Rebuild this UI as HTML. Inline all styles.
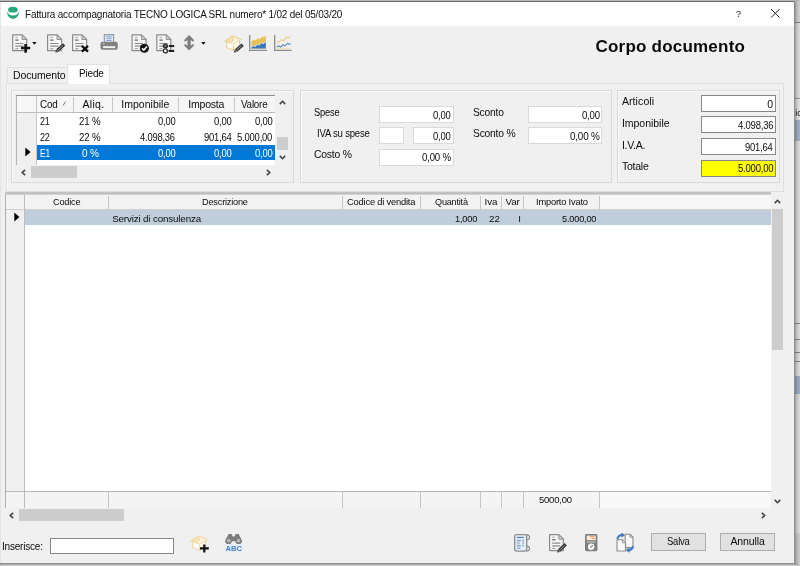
<!DOCTYPE html>
<html lang="it">
<head>
<meta charset="utf-8">
<title>Fattura accompagnatoria</title>
<style>
html,body{margin:0;padding:0;}
body{width:800px;height:566px;overflow:hidden;background:#e2e2e2;font-family:"Liberation Sans",sans-serif;font-size:10px;color:#1a1a1a;position:relative;}
#root,#root div,#root svg{position:absolute;box-sizing:border-box;}
#root{left:0;top:0;width:800px;height:566px;overflow:hidden;}
.t{white-space:nowrap;line-height:1;will-change:opacity;transform-origin:0 0;}
.box{border:1px solid #dadada;box-shadow:inset 1px 1px 0 #fafafa;}
.inp{background:#fff;border:1px solid #d9d9d9;}
.inpd{background:#fff;border:1px solid #868686;}
.vl{width:1px;background:#c6c6c6;}
.hl{height:1px;background:#c6c6c6;}
.btn{background:#e1e1e1;border:1px solid #adadad;}
</style>
</head>
<body>
<div id="root">
  <!-- background window peeking out on the right / shadow -->
  <div style="left:794px;top:0;width:6px;height:566px;background:#e6e6e6;"></div>
  <div style="left:794px;top:0;width:6px;height:22px;background:#dcdcdc;"></div>
  <div style="left:795px;top:22px;width:5px;height:1px;background:#8e8e8e;"></div>
  <div style="left:795px;top:98px;width:5px;height:1px;background:#a4a4a4;"></div>
  <div style="left:795px;top:99px;width:5px;height:21px;background:#eeeeee;"></div>
  <div class="t" style="left:795.3px;top:108.6px;font-size:9px;color:#111;">ic</div>
  <div style="left:795px;top:120px;width:5px;height:21px;background:#a9b9cd;"></div>
  <div style="left:795px;top:323px;width:5px;height:1px;background:#8c8c8c;"></div>
  <div style="left:795px;top:339px;width:5px;height:1px;background:#8c8c8c;"></div>
  <div style="left:795px;top:352px;width:5px;height:1px;background:#8c8c8c;"></div>
  <div style="left:795px;top:361px;width:5px;height:1px;background:#8c8c8c;"></div>
  <div style="left:795px;top:376px;width:5px;height:18px;background:#a3b6cf;"></div>
  <div style="left:795px;top:533px;width:5px;height:33px;background:#d6d6d6;"></div>
  <div style="left:794px;top:0;width:6px;height:566px;background:linear-gradient(90deg,rgba(0,0,0,.42),rgba(0,0,0,.16) 45%,rgba(0,0,0,.04));"></div>
  <div style="left:0;top:0;width:800px;height:1px;background:#b8b8b8;"></div>
  <div style="left:0;top:563px;width:797px;height:3px;background:linear-gradient(#7e7e7e,#b8b8b8 60%,#d0d0d0);"></div>

  <!-- window -->
  <div id="win" style="left:0;top:1px;width:794px;height:562px;background:#f0f0f0;border-top:1px solid #6a6a6a;"></div>
  <div style="left:0;top:2px;width:1px;height:561px;background:#e4e4e4;"></div>
  <div id="titlebar" style="left:1px;top:2px;width:793px;height:24px;background:#fff;"></div>
  <svg style="left:6px;top:6px;" width="16" height="15" viewBox="0 0 16 15">
    <ellipse cx="6.9" cy="3.7" rx="4.9" ry="2.9" fill="#2ba77c"/>
    <path d="M0.8 5.2 C1.6 15.2 12.6 15.2 13.4 5.2 C11.6 10.8 2.6 10.8 0.8 5.2Z" fill="#2ba77c"/>
  </svg>
  <svg style="left:770px;top:8px;" width="11" height="11" viewBox="0 0 11 11"><path d="M1 1 L9.6 9.6 M9.6 1 L1 9.6" stroke="#222" stroke-width="1" fill="none"/></svg>

  <!-- TOOLBAR -->
    <svg style="left:12px;top:34px;" width="20" height="20" viewBox="0 0 20 20"><path d="M0.7 0.9 H10.10 L14.7 5.50 V16.7 H0.7 Z" fill="#f6f6f6" stroke="#8a8a8a" stroke-width="1.2" stroke-linejoin="round"/><path d="M10.10 0.9 V5.50 H14.7 Z" fill="#d0d0d0" stroke="#8a8a8a" stroke-width="0.9" stroke-linejoin="round"/><path d="M3.3 3.50 h2.6" stroke="#b0b0b0" stroke-width="1.1"/><path d="M3.3 6.10 h3.2" stroke="#5a5a5a" stroke-width="1.2"/><path d="M3.3 9.50 h8.20 M3.3 12.10 h8.20" stroke="#8c8c8c" stroke-width="1.2"/><path d="M3.3 14.70 h3.2" stroke="#9a9a9a" stroke-width="1.1"/><path d="M9 14.1 H18.2 M13.6 10 V18.8" stroke="#111" stroke-width="2.5"/></svg>
  <svg style="left:32px;top:41px;" width="6" height="5" viewBox="0 0 6 5"><path d="M0.2 0.9 H4.6 L2.4 3.7Z" fill="#111"/></svg>
  <svg style="left:47px;top:34px;" width="20" height="20" viewBox="0 0 20 20"><path d="M0.6 0.9 H10.00 L14.6 5.50 V16.7 H0.6 Z" fill="#f6f6f6" stroke="#8a8a8a" stroke-width="1.2" stroke-linejoin="round"/><path d="M10.00 0.9 V5.50 H14.6 Z" fill="#d0d0d0" stroke="#8a8a8a" stroke-width="0.9" stroke-linejoin="round"/><path d="M3.2 3.50 h2.6" stroke="#b0b0b0" stroke-width="1.1"/><path d="M3.2 6.10 h3.2" stroke="#5a5a5a" stroke-width="1.2"/><path d="M3.2 9.50 h8.20 M3.2 12.10 h8.20" stroke="#8c8c8c" stroke-width="1.2"/><path d="M3.2 14.70 h3.2" stroke="#9a9a9a" stroke-width="1.1"/><path d="M8.30 18.40 L11.47 18.04 L9.00 15.29Z" fill="#3a3a3a"/><path d="M11.47 18.04 L18.44 11.78 L15.96 9.02 L9.00 15.29Z" fill="#2e2e2e" stroke="#f0f0f0" stroke-width="0.5"/><path d="M10.83 16.13 L16.01 11.47" stroke="#9a9a9a" stroke-width="1.0"/></svg>
  <svg style="left:72px;top:34px;" width="20" height="20" viewBox="0 0 20 20"><path d="M0.6 0.9 H10.00 L14.6 5.50 V16.7 H0.6 Z" fill="#f6f6f6" stroke="#8a8a8a" stroke-width="1.2" stroke-linejoin="round"/><path d="M10.00 0.9 V5.50 H14.6 Z" fill="#d0d0d0" stroke="#8a8a8a" stroke-width="0.9" stroke-linejoin="round"/><path d="M3.2 3.50 h2.6" stroke="#b0b0b0" stroke-width="1.1"/><path d="M3.2 6.10 h3.2" stroke="#5a5a5a" stroke-width="1.2"/><path d="M3.2 9.50 h8.20 M3.2 12.10 h8.20" stroke="#8c8c8c" stroke-width="1.2"/><path d="M3.2 14.70 h3.2" stroke="#9a9a9a" stroke-width="1.1"/><path d="M9.9 11.8 L16 17.6 M16 11.8 L9.9 17.6" stroke="#111" stroke-width="2.3"/></svg>
  <svg style="left:100px;top:34px;" width="19" height="17" viewBox="0 0 19 17"><path d="M4.3 8 V0.6 H13.6 V8" fill="#dfeaf6" stroke="#8e9aa8" stroke-width="1.1"/><path d="M6.3 2.7 H11.6 M6.3 4.6 H11.6 M6.3 6.5 H11.6" stroke="#7fa6d2" stroke-width="1"/><rect x="0.5" y="7.8" width="17.2" height="8" rx="2" fill="#808080"/><rect x="3" y="12.2" width="12.2" height="1.9" fill="#f4f4f4"/><rect x="2.6" y="9.3" width="2" height="0.9" fill="#e0e0e0"/></svg>
  <svg style="left:131px;top:34px;" width="20" height="20" viewBox="0 0 20 20"><path d="M1.1 0.9 H10.50 L15.1 5.50 V16.7 H1.1 Z" fill="#f6f6f6" stroke="#8a8a8a" stroke-width="1.2" stroke-linejoin="round"/><path d="M10.50 0.9 V5.50 H15.1 Z" fill="#d0d0d0" stroke="#8a8a8a" stroke-width="0.9" stroke-linejoin="round"/><path d="M3.7 3.50 h2.6" stroke="#b0b0b0" stroke-width="1.1"/><path d="M3.7 6.10 h3.2" stroke="#5a5a5a" stroke-width="1.2"/><path d="M3.7 9.50 h8.20 M3.7 12.10 h8.20" stroke="#8c8c8c" stroke-width="1.2"/><path d="M3.7 14.70 h3.2" stroke="#9a9a9a" stroke-width="1.1"/><circle cx="13.4" cy="14.25" r="4.5" fill="#111"/><path d="M11 14.3 L12.8 16.1 L16 12.5" stroke="#fff" stroke-width="1.5" fill="none"/></svg>
  <svg style="left:156px;top:34px;" width="20" height="20" viewBox="0 0 20 20"><path d="M0.8 0.9 H10.20 L14.8 5.50 V16.7 H0.8 Z" fill="#f6f6f6" stroke="#8a8a8a" stroke-width="1.2" stroke-linejoin="round"/><path d="M10.20 0.9 V5.50 H14.8 Z" fill="#d0d0d0" stroke="#8a8a8a" stroke-width="0.9" stroke-linejoin="round"/><path d="M3.4 3.50 h2.6" stroke="#b0b0b0" stroke-width="1.1"/><path d="M3.4 6.10 h3.2" stroke="#5a5a5a" stroke-width="1.2"/><path d="M3.4 9.50 h8.20 M3.4 12.10 h8.20" stroke="#8c8c8c" stroke-width="1.2"/><path d="M3.4 14.70 h3.2" stroke="#9a9a9a" stroke-width="1.1"/><circle cx="9.4" cy="12" r="2" fill="#6a6a6a" stroke="#222" stroke-width="1.2"/><rect x="12.8" y="11" width="5.4" height="2.1" fill="#222"/><circle cx="9.4" cy="16.9" r="2" fill="#fff" stroke="#222" stroke-width="1.2"/><rect x="12.8" y="15.9" width="5.4" height="2.1" fill="#222"/></svg>
  <svg style="left:183.5px;top:35px;" width="11" height="16" viewBox="0 0 11 16"><path d="M5.1 0.1 L10.2 5.3 L8.9 6.7 L6.7 4.9 V10.7 L8.9 8.9 L10.2 10.3 L5.1 15.5 L0 10.3 L1.3 8.9 L3.5 10.7 V4.9 L1.3 6.7 L0 5.3Z" fill="#7e7e7e"/></svg>
  <svg style="left:201px;top:41px;" width="6" height="5" viewBox="0 0 6 5"><path d="M0.2 0.9 H4.6 L2.4 3.7Z" fill="#111"/></svg>
  <svg style="left:224px;top:35px;" width="20" height="18" viewBox="0 0 20 18"><path d="M1 6.2 L8.6 1 L17 4.6 L9.6 9.4Z" fill="#fbf4de" stroke="#ebcf8c" stroke-width="1.1" stroke-linejoin="round"/><path d="M2.6 7.4 V12.6 L9.6 15.2 V9.4" fill="#fdfdfb" stroke="#ebcf8c" stroke-width="1.1" stroke-linejoin="round"/><path d="M9.6 9.4 V15.2 L15.6 11.6 V5.8" fill="#fdf8ea" stroke="#ebcf8c" stroke-width="1.1" stroke-linejoin="round"/><path d="M1 6.2 L8.6 1 L9.4 5.4 L5.6 7.6Z" fill="#f3e2b4" stroke="#ebcf8c" stroke-width="0.9" stroke-linejoin="round"/><path d="M10.00 17.40 L13.14 17.02 L10.75 14.33Z" fill="#3a3a3a"/><path d="M13.14 17.02 L19.99 10.95 L17.61 8.25 L10.75 14.33Z" fill="#2e2e2e" stroke="#f0f0f0" stroke-width="0.5"/><path d="M12.54 15.14 L17.60 10.66" stroke="#9a9a9a" stroke-width="1.0"/></svg>
  <svg style="left:248.6px;top:35px;" width="19" height="17" viewBox="0 0 19 17"><path d="M2.4 6.6 L5 4.6 L6.4 5.6 L9.2 3.2 L10.6 4.2 L13.4 1.6 L14.6 2.6 L16.8 0.6 V13.6 H2.4Z" fill="#e9c257"/><path d="M2.4 12.2 L4.6 10.6 L6 11.6 L8.6 9.2 L10 10.2 L12.6 7.8 L14 8.8 L16.8 6.6 V13.6 H2.4Z" fill="#3b78ba"/><path d="M2.4 12.2 L4.6 10.6 L6 11.6 L8.6 9.2 L10 10.2 L12.6 7.8 L14 8.8 L16.8 6.6" fill="none" stroke="#f4f4f4" stroke-width="0.8"/><path d="M0.7 0 V15.4 H18" fill="none" stroke="#8c8c8c" stroke-width="1.3"/></svg>
  <svg style="left:273.8px;top:35px;" width="19" height="17" viewBox="0 0 19 17"><path d="M2.6 6.4 L4.8 7.6 L7.4 4.6 L9.6 5.8 L12.6 1.8 L14.4 3.2 L16.4 1.4" fill="none" stroke="#ebd08a" stroke-width="1.1"/><path d="M2.6 12 L5 11 L6.6 12.2 L9 9.8 L10.8 10.8 L13.4 8.4 L14.8 9.4 L16.6 8.6" fill="none" stroke="#5a89c6" stroke-width="1.1"/><path d="M2.6 13.2 H16.6" stroke="#f0ddb0" stroke-width="1"/><path d="M0.7 0 V15.4 H17.6" fill="none" stroke="#8c8c8c" stroke-width="1.3"/></svg>
  <svg style="left:189.6px;top:534.6px;" width="20" height="18" viewBox="0 0 20 18"><path d="M1 6.2 L8.6 1 L17 4.6 L9.6 9.4Z" fill="#fbf4de" stroke="#f0d9a4" stroke-width="1.1" stroke-linejoin="round"/><path d="M2.6 7.4 V12.6 L9.6 15.2 V9.4" fill="#fdfdfb" stroke="#f0d9a4" stroke-width="1.1" stroke-linejoin="round"/><path d="M9.6 9.4 V15.2 L15.6 11.6 V5.8" fill="#fdf8ea" stroke="#f0d9a4" stroke-width="1.1" stroke-linejoin="round"/><path d="M1 6.2 L8.6 1 L9.4 5.4 L5.6 7.6Z" fill="#f3e2b4" stroke="#f0d9a4" stroke-width="0.9" stroke-linejoin="round"/><path d="M10 13.3 H18.8 M14.3 9.4 V17.6" stroke="#111" stroke-width="2.2"/></svg>
  <svg style="will-change:opacity;left:224.6px;top:533.4px;" width="18" height="19" viewBox="0 0 18 19"><path d="M3.6 1 H6.6 L7.6 3.4 H9.6 L10.6 1 H13.6 L16.8 7 A3.3 3.3 0 1 1 10.4 8.2 H6.8 A3.3 3.3 0 1 1 0.4 7Z" fill="#7c7c7c"/><circle cx="3.7" cy="7.6" r="1.9" fill="#b8b8b8"/><circle cx="13.5" cy="7.6" r="1.9" fill="#b8b8b8"/><rect x="0" y="11" width="17.4" height="7.4" fill="#e3eef9"/><text x="8.7" y="17.6" text-anchor="middle" font-family="Liberation Sans, sans-serif" font-weight="bold" font-size="7.6" fill="#4a82bd" textLength="16.6" lengthAdjust="spacingAndGlyphs">ABC</text></svg>
  <svg style="left:513.6px;top:533.6px;" width="17" height="18" viewBox="0 0 17 18"><rect x="0.7" y="0.7" width="12" height="16.4" rx="1.8" fill="#e6f0fb" stroke="#8c8c8c" stroke-width="1.3"/><path d="M12.4 0.8 A2.5 2.5 0 1 1 12.7 5.7 M12.7 12.1 A2.5 2.5 0 1 1 12.4 17" fill="none" stroke="#8c8c8c" stroke-width="1.2"/><path d="M2.8 3.4 H9.8" stroke="#3f74b4" stroke-width="1.1"/><path d="M2.8 6.6 H6.8 M8.2 6.6 H10 M2.8 11.6 H6.8 M8.2 11.6 H10" stroke="#8aa9cc" stroke-width="1.6"/><path d="M2.8 9.1 H5.6 M8.2 9.1 H10 M2.8 14.2 H6.4" stroke="#6f95c4" stroke-width="1"/></svg>
  <svg style="left:548.6px;top:533.8px;" width="20" height="20" viewBox="0 0 20 20"><path d="M0.6 0.6 H9.80 L14.4 5.20 V16.6 H0.6 Z" fill="#f6f6f6" stroke="#8a8a8a" stroke-width="1.2" stroke-linejoin="round"/><path d="M9.80 0.6 V5.20 H14.4 Z" fill="#d0d0d0" stroke="#8a8a8a" stroke-width="0.9" stroke-linejoin="round"/><path d="M3.2 3.20 h2.6" stroke="#b0b0b0" stroke-width="1.1"/><path d="M3.2 5.80 h3.2" stroke="#5a5a5a" stroke-width="1.2"/><path d="M3.2 9.20 h8.00 M3.2 11.80 h8.00" stroke="#8c8c8c" stroke-width="1.2"/><path d="M3.2 14.40 h3.2" stroke="#9a9a9a" stroke-width="1.1"/><path d="M8.20 18.40 L11.36 17.94 L8.81 15.27Z" fill="#3a3a3a"/><path d="M11.36 17.94 L18.08 11.54 L15.52 8.86 L8.81 15.27Z" fill="#2e2e2e" stroke="#f0f0f0" stroke-width="0.5"/><path d="M10.66 16.05 L15.64 11.30" stroke="#9a9a9a" stroke-width="1.0"/></svg>
  <svg style="left:584.8px;top:534px;" width="13" height="18" viewBox="0 0 13 18"><rect x="0" y="0" width="12.4" height="17.2" rx="1.4" fill="#7e7e7e"/><rect x="1.7" y="1.6" width="9" height="4.6" fill="#fbe8dc"/><path d="M5 2.6 H9.4 M6.4 4.4 H9.4" stroke="#ee9a5c" stroke-width="1"/><path d="M1.7 8 H10.7" stroke="#d4d4d4" stroke-width="0.9"/><circle cx="6.2" cy="12.7" r="3.2" fill="#fff"/><path d="M5.4 13.6 L7.8 11.2" stroke="#787878" stroke-width="1.2"/></svg>
  <svg style="left:616.4px;top:532.8px;" width="19" height="20" viewBox="0 0 19 20"><path d="M9.2 1.2 H14 L17 4.2 V14.6 H9.2Z" fill="#f8f8f8" stroke="#8a8a8a" stroke-width="1.1" stroke-linejoin="round"/><path d="M14 1.2 V4.2 H17" fill="none" stroke="#8a8a8a" stroke-width="0.9"/><path d="M1 6.8 H6.6 L9.6 9.8 V18 H1Z" fill="#f8f8f8" stroke="#8a8a8a" stroke-width="1.1" stroke-linejoin="round"/><path d="M6.6 6.8 V9.8 H9.6" fill="#e4e4e4" stroke="#8a8a8a" stroke-width="0.9"/><path d="M1.4 6 A5 5 0 0 1 6.4 2" fill="none" stroke="#3b7ac4" stroke-width="2.0"/><path d="M5.2 -0.6 L9 2 L5.4 4.8Z" fill="#3b7ac4"/><path d="M17 13.2 A5 5 0 0 1 12.4 17.2" fill="none" stroke="#3b7ac4" stroke-width="2.0"/><path d="M13.6 19.8 L9.8 17.2 L13.4 14.4Z" fill="#3b7ac4"/><path d="M10.6 13 L12.4 14.8 L15.6 11.6" fill="none" stroke="#6aa0dc" stroke-width="0"/></svg>


  <!-- TABS -->
  <div id="tabpanel" style="left:6px;top:83px;width:778px;height:109px;border:1px solid #dedede;background:#f0f0f0;box-shadow:inset 1px 0 0 #fbfbfb;"></div>
  <div id="tab1" style="left:7px;top:67px;width:61px;height:16px;border:1px solid #e0e0e0;border-bottom:none;background:#f0f0f0;"></div>
  <div id="tab2" style="left:67px;top:64px;width:43px;height:20px;border:1px solid #e2e2e2;border-bottom:none;background:#fdfdfd;"></div>

  <!-- group boxes -->
  <div class="box" id="g1" style="left:11px;top:90px;width:283px;height:93px;"></div>
  <div class="box" id="g2" style="left:300px;top:90px;width:312px;height:93px;"></div>
  <div class="box" id="g3" style="left:617px;top:90px;width:163px;height:93px;"></div>

  <!-- GRID 1 -->
  <div id="grid1" style="left:16px;top:95px;width:259px;height:70px;background:#fff;border-top:1px solid #8e8e8e;border-left:1px solid #b4b4b4;"></div>
  <div style="left:17px;top:96px;width:258px;height:16px;background:#f6f6f6;"></div>
  <div style="left:17px;top:112px;width:19px;height:53px;background:#f0f0f0;"></div>
  <div class="hl" style="left:17px;top:112px;width:258px;background:#bdbdbd;"></div>
  <div class="vl" style="left:36px;top:96px;height:69px;"></div>
  <div class="vl" style="left:73px;top:97px;height:15px;"></div>
  <div class="vl" style="left:112px;top:97px;height:15px;"></div>
  <div class="vl" style="left:178px;top:97px;height:15px;"></div>
  <div class="vl" style="left:234px;top:97px;height:15px;"></div>
  <div style="left:37px;top:145px;width:238px;height:15px;background:#0078d7;"></div>
  <svg style="left:25px;top:147px;" width="6" height="10" viewBox="0 0 6 10"><path d="M0.3 0.5 L5.6 5 L0.3 9.5Z" fill="#000"/></svg>
  <svg style="left:62px;top:100px;" width="5" height="7" viewBox="0 0 5 7"><path d="M1 5.6 L3.6 1.6" stroke="#666" stroke-width="0.9"/></svg>
  <!-- grid1 v-scrollbar -->
  <div style="left:275px;top:95px;width:16px;height:70px;background:#f0f0f0;"></div>
  <div style="left:277px;top:137px;width:11px;height:13px;background:#cdcdcd;"></div>
  <svg style="left:278px;top:99px;" width="9" height="7" viewBox="0 0 9 7"><path d="M1.8 5.1 L4.5 2.3 L7.2 5.1" stroke="#444" stroke-width="1.6" fill="none"/></svg>
  <svg style="left:278px;top:154px;" width="9" height="7" viewBox="0 0 9 7"><path d="M1.8 1.9 L4.5 4.7 L7.2 1.9" stroke="#444" stroke-width="1.6" fill="none"/></svg>
  <!-- grid1 h-scrollbar -->
  <div style="left:16px;top:165px;width:259px;height:13px;background:#f0f0f0;"></div>
  <div style="left:31px;top:166px;width:46px;height:12px;background:#cdcdcd;"></div>
  <svg style="left:20px;top:168px;" width="7" height="9" viewBox="0 0 7 9"><path d="M5.1 1.8 L2.3 4.5 L5.1 7.2" stroke="#444" stroke-width="1.6" fill="none"/></svg>
  <svg style="left:265px;top:168px;" width="7" height="9" viewBox="0 0 7 9"><path d="M1.9 1.8 L4.7 4.5 L1.9 7.2" stroke="#444" stroke-width="1.6" fill="none"/></svg>

  <!-- GROUP 2 inputs -->
  <div class="inp" style="left:379px;top:106px;width:75px;height:17px;"></div>
  <div class="inp" style="left:379px;top:127px;width:25px;height:17px;"></div>
  <div class="inp" style="left:413px;top:127px;width:41px;height:17px;"></div>
  <div class="inp" style="left:379px;top:149px;width:75px;height:17px;"></div>
  <div class="inp" style="left:528px;top:106px;width:74px;height:17px;"></div>
  <div class="inp" style="left:528px;top:127px;width:74px;height:17px;"></div>

  <!-- GROUP 3 inputs -->
  <div class="inpd" style="left:701px;top:95px;width:75px;height:17px;"></div>
  <div class="inpd" style="left:701px;top:116px;width:75px;height:17px;"></div>
  <div class="inpd" style="left:701px;top:138px;width:75px;height:17px;"></div>
  <div class="inpd" style="left:701px;top:160px;width:75px;height:17px;background:#ffff00;"></div>

  <!-- MAIN GRID -->
  <div id="grid2" style="left:5px;top:194px;width:766px;height:314px;background:#fff;border-left:1px solid #b0b0b0;"></div>
  <div style="left:5px;top:192px;width:766px;height:3px;background:linear-gradient(#c6c6c6,#bdbdbd 55%,#dedede);"></div>
  <div style="left:6px;top:195px;width:765px;height:14px;background:#f7f7f7;"></div>
  <div style="left:6px;top:195px;width:594px;height:14px;background:#f3f3f3;"></div>
  <div style="left:6px;top:209px;width:18px;height:283px;background:#f0f0f0;"></div>
  <div class="hl" style="left:6px;top:209px;width:765px;background:#cfcfcf;"></div>
  <div style="left:25px;top:210px;width:746px;height:15px;background:#c0cedc;"></div>
  <div class="vl" style="left:24px;top:195px;height:313px;background:#bcbcbc;"></div>
  <div class="vl" style="left:108px;top:196px;height:13px;"></div>
  <div class="vl" style="left:342px;top:196px;height:13px;"></div>
  <div class="vl" style="left:420px;top:196px;height:13px;"></div>
  <div class="vl" style="left:480px;top:196px;height:13px;"></div>
  <div class="vl" style="left:501px;top:196px;height:13px;"></div>
  <div class="vl" style="left:523px;top:196px;height:13px;"></div>
  <div class="vl" style="left:599px;top:196px;height:13px;"></div>
  <svg style="left:14px;top:212px;" width="6" height="10" viewBox="0 0 6 10"><path d="M0.3 0.5 L5.4 5 L0.3 9.5Z" fill="#000"/></svg>
  <!-- footer row -->
  <div style="left:6px;top:492px;width:765px;height:16px;background:#f9f9f9;"></div>
  <div style="left:6px;top:492px;width:594px;height:16px;background:#f4f4f4;"></div>
  <div class="hl" style="left:6px;top:491px;width:765px;background:#b8b8b8;"></div>
  <div class="vl" style="left:24px;top:492px;height:16px;background:#bcbcbc;"></div>
  <div class="vl" style="left:108px;top:492px;height:16px;"></div>
  <div class="vl" style="left:342px;top:492px;height:16px;"></div>
  <div class="vl" style="left:420px;top:492px;height:16px;"></div>
  <div class="vl" style="left:480px;top:492px;height:16px;"></div>
  <div class="vl" style="left:501px;top:492px;height:16px;"></div>
  <div class="vl" style="left:523px;top:492px;height:16px;"></div>
  <div class="vl" style="left:599px;top:492px;height:16px;"></div>
  <!-- main v-scrollbar -->
  <div style="left:771px;top:194px;width:13px;height:314px;background:#f0f0f0;"></div>
  <div style="left:772px;top:209px;width:11px;height:141px;background:#cdcdcd;"></div>
  <svg style="left:773px;top:198px;" width="9" height="7" viewBox="0 0 9 7"><path d="M1.8 5.1 L4.5 2.3 L7.2 5.1" stroke="#444" stroke-width="1.6" fill="none"/></svg>
  <svg style="left:773px;top:498px;" width="9" height="7" viewBox="0 0 9 7"><path d="M1.8 1.9 L4.5 4.7 L7.2 1.9" stroke="#444" stroke-width="1.6" fill="none"/></svg>
  <!-- main h-scrollbar -->
  <div style="left:19px;top:509px;width:105px;height:12px;background:#cdcdcd;"></div>
  <svg style="left:8px;top:511px;" width="7" height="9" viewBox="0 0 7 9"><path d="M5.1 1.8 L2.3 4.5 L5.1 7.2" stroke="#444" stroke-width="1.6" fill="none"/></svg>
  <svg style="left:760px;top:511px;" width="7" height="9" viewBox="0 0 7 9"><path d="M1.9 1.8 L4.7 4.5 L1.9 7.2" stroke="#444" stroke-width="1.6" fill="none"/></svg>

  <!-- bottom bar -->
  <div class="inpd" style="left:50px;top:538px;width:124px;height:16px;"></div>
  <div class="btn" style="left:651px;top:533px;width:55px;height:18px;"></div>
  <div class="btn" style="left:720px;top:533px;width:55px;height:18px;"></div>

  <!-- TEXT -->
<div class="t" id="t0" style="left:24.50px;top:8.61px;font-size:10.5px;color:#111;letter-spacing:-0.220px;transform:scaleX(0.9514);">Fattura accompagnatoria TECNO LOGICA SRL numero* 1/02 del 05/03/20</div>
<div class="t" id="t1" style="left:735.65px;top:9.47px;font-size:9.6px;color:#222;">?</div>
<div class="t" id="t2" style="left:595.50px;top:37.61px;font-size:17px;color:#0a0a0a;font-weight:bold;letter-spacing:0.215px;">Corpo documento</div>
<div class="t" id="t3" style="left:13.00px;top:70.41px;font-size:10.5px;color:#0c0c0c;letter-spacing:-0.144px;">Documento</div>
<div class="t" id="t4" style="left:79.00px;top:68.41px;font-size:10.5px;color:#0c0c0c;letter-spacing:-0.220px;transform:scaleX(0.9566);">Piede</div>
<div class="t" id="t5" style="left:39.70px;top:99.41px;font-size:10.5px;color:#0c0c0c;letter-spacing:-0.220px;transform:scaleX(0.9377);">Cod</div>
<div class="t" id="t6" style="left:82.50px;top:99.41px;font-size:10.5px;color:#0c0c0c;letter-spacing:0.298px;">Aliq.</div>
<div class="t" id="t7" style="left:121.20px;top:99.41px;font-size:10.5px;color:#0c0c0c;letter-spacing:0.031px;">Imponibile</div>
<div class="t" id="t8" style="left:188.30px;top:99.41px;font-size:10.5px;color:#0c0c0c;letter-spacing:-0.220px;">Imposta</div>
<div class="t" id="t9" style="left:240.50px;top:99.41px;font-size:10.5px;color:#0c0c0c;letter-spacing:-0.220px;transform:scaleX(0.9360);">Valore</div>
<div class="t" id="t10" style="left:39.70px;top:116.31px;font-size:10.5px;color:#0c0c0c;letter-spacing:-0.220px;transform:scaleX(0.8434);">21</div>
<div class="t" id="t11" style="left:79.00px;top:116.31px;font-size:10.5px;color:#0c0c0c;letter-spacing:-0.220px;transform:scaleX(0.9243);">21 %</div>
<div class="t" id="t12" style="left:157.70px;top:116.31px;font-size:10.5px;color:#0c0c0c;letter-spacing:-0.220px;transform:scaleX(0.8928);">0,00</div>
<div class="t" id="t13" style="left:214.20px;top:116.31px;font-size:10.5px;color:#0c0c0c;letter-spacing:-0.220px;transform:scaleX(0.9029);">0,00</div>
<div class="t" id="t14" style="left:254.70px;top:116.31px;font-size:10.5px;color:#0c0c0c;letter-spacing:-0.220px;transform:scaleX(0.9029);">0,00</div>
<div class="t" id="t15" style="left:39.70px;top:132.31px;font-size:10.5px;color:#0c0c0c;letter-spacing:-0.220px;transform:scaleX(0.8606);">22</div>
<div class="t" id="t16" style="left:79.00px;top:132.31px;font-size:10.5px;color:#0c0c0c;letter-spacing:-0.220px;transform:scaleX(0.9243);">22 %</div>
<div class="t" id="t17" style="left:140.30px;top:132.31px;font-size:10.5px;color:#0c0c0c;letter-spacing:-0.220px;transform:scaleX(0.8913);">4.098,36</div>
<div class="t" id="t18" style="left:204.20px;top:132.31px;font-size:10.5px;color:#0c0c0c;letter-spacing:-0.220px;transform:scaleX(0.8981);">901,64</div>
<div class="t" id="t19" style="left:237.20px;top:132.31px;font-size:10.5px;color:#0c0c0c;letter-spacing:-0.220px;transform:scaleX(0.8989);">5.000,00</div>
<div class="t" id="t20" style="left:39.70px;top:147.91px;font-size:10.5px;color:#fff;letter-spacing:-0.220px;transform:scaleX(0.8000);">E1</div>
<div class="t" id="t21" style="left:81.70px;top:147.91px;font-size:10.5px;color:#fff;letter-spacing:-0.220px;transform:scaleX(0.9586);">0 %</div>
<div class="t" id="t22" style="left:157.70px;top:147.91px;font-size:10.5px;color:#fff;letter-spacing:-0.220px;transform:scaleX(0.8928);">0,00</div>
<div class="t" id="t23" style="left:214.20px;top:147.91px;font-size:10.5px;color:#fff;letter-spacing:-0.220px;transform:scaleX(0.9029);">0,00</div>
<div class="t" id="t24" style="left:254.70px;top:147.91px;font-size:10.5px;color:#fff;letter-spacing:-0.220px;transform:scaleX(0.9029);">0,00</div>
<div class="t" id="t25" style="left:314.00px;top:106.81px;font-size:10.5px;color:#0c0c0c;letter-spacing:-0.220px;transform:scaleX(0.8880);">Spese</div>
<div class="t" id="t26" style="left:316.70px;top:128.11px;font-size:10.5px;color:#0c0c0c;letter-spacing:-0.220px;transform:scaleX(0.9094);">IVA su spese</div>
<div class="t" id="t27" style="left:314.00px;top:149.41px;font-size:10.5px;color:#0c0c0c;letter-spacing:-0.220px;transform:scaleX(0.9862);">Costo %</div>
<div class="t" id="t28" style="left:473.00px;top:106.81px;font-size:10.5px;color:#0c0c0c;letter-spacing:-0.220px;transform:scaleX(0.9764);">Sconto</div>
<div class="t" id="t29" style="left:473.00px;top:128.11px;font-size:10.5px;color:#0c0c0c;letter-spacing:-0.220px;transform:scaleX(0.9799);">Sconto %</div>
<div class="t" id="t30" style="left:432.50px;top:109.61px;font-size:10.5px;color:#0c0c0c;letter-spacing:-0.220px;transform:scaleX(0.9029);">0,00</div>
<div class="t" id="t31" style="left:432.50px;top:130.81px;font-size:10.5px;color:#0c0c0c;letter-spacing:-0.220px;transform:scaleX(0.9029);">0,00</div>
<div class="t" id="t32" style="left:421.70px;top:152.41px;font-size:10.5px;color:#0c0c0c;letter-spacing:-0.220px;transform:scaleX(0.9215);">0,00 %</div>
<div class="t" id="t33" style="left:581.50px;top:109.61px;font-size:10.5px;color:#0c0c0c;letter-spacing:-0.220px;transform:scaleX(0.9129);">0,00</div>
<div class="t" id="t34" style="left:570.20px;top:130.81px;font-size:10.5px;color:#0c0c0c;letter-spacing:-0.220px;transform:scaleX(0.9439);">0,00 %</div>
<div class="t" id="t35" style="left:621.90px;top:96.31px;font-size:10.5px;color:#0c0c0c;letter-spacing:0.104px;">Articoli</div>
<div class="t" id="t36" style="left:621.90px;top:117.91px;font-size:10.5px;color:#0c0c0c;letter-spacing:-0.025px;">Imponibile</div>
<div class="t" id="t37" style="left:621.90px;top:139.71px;font-size:10.5px;color:#0c0c0c;letter-spacing:-0.220px;">I.V.A.</div>
<div class="t" id="t38" style="left:621.90px;top:160.91px;font-size:10.5px;color:#0c0c0c;letter-spacing:-0.216px;">Totale</div>
<div class="t" id="t39" style="left:767.20px;top:98.71px;font-size:10.5px;color:#0c0c0c;">0</div>
<div class="t" id="t40" style="left:737.50px;top:120.31px;font-size:10.5px;color:#0c0c0c;letter-spacing:-0.220px;transform:scaleX(0.9040);">4.098,36</div>
<div class="t" id="t41" style="left:745.20px;top:141.81px;font-size:10.5px;color:#0c0c0c;letter-spacing:-0.220px;transform:scaleX(0.8981);">901,64</div>
<div class="t" id="t42" style="left:737.50px;top:163.11px;font-size:10.5px;color:#0c0c0c;letter-spacing:-0.220px;transform:scaleX(0.9040);">5.000,00</div>
<div class="t" id="t43" style="left:52.70px;top:197.40px;font-size:9.8px;color:#0c0c0c;letter-spacing:-0.220px;transform:scaleX(0.9350);">Codice</div>
<div class="t" id="t44" style="left:202.00px;top:197.40px;font-size:9.8px;color:#0c0c0c;letter-spacing:-0.220px;transform:scaleX(0.9388);">Descrizione</div>
<div class="t" id="t45" style="left:347.00px;top:197.40px;font-size:9.8px;color:#0c0c0c;letter-spacing:-0.220px;transform:scaleX(0.9558);">Codice di vendita</div>
<div class="t" id="t46" style="left:434.50px;top:197.40px;font-size:9.8px;color:#0c0c0c;letter-spacing:-0.220px;transform:scaleX(0.9294);">Quantità</div>
<div class="t" id="t47" style="left:484.50px;top:197.40px;font-size:9.8px;color:#0c0c0c;letter-spacing:-0.060px;">Iva</div>
<div class="t" id="t48" style="left:505.50px;top:197.40px;font-size:9.8px;color:#0c0c0c;letter-spacing:-0.128px;">Var</div>
<div class="t" id="t49" style="left:535.50px;top:197.40px;font-size:9.8px;color:#0c0c0c;letter-spacing:-0.220px;transform:scaleX(0.9531);">Importo Ivato</div>
<div class="t" id="t50" style="left:112.20px;top:213.50px;font-size:9.8px;color:#0c0c0c;letter-spacing:-0.154px;">Servizi di consulenza</div>
<div class="t" id="t51" style="left:455.00px;top:213.50px;font-size:9.8px;color:#0c0c0c;letter-spacing:-0.220px;transform:scaleX(0.9509);">1,000</div>
<div class="t" id="t52" style="left:489.00px;top:213.50px;font-size:9.8px;color:#0c0c0c;letter-spacing:0.051px;">22</div>
<div class="t" id="t53" style="left:518.15px;top:213.50px;font-size:9.8px;color:#0c0c0c;">I</div>
<div class="t" id="t54" style="left:561.50px;top:213.50px;font-size:9.8px;color:#0c0c0c;letter-spacing:-0.220px;transform:scaleX(0.9422);">5.000,00</div>
<div class="t" id="t55" style="left:539.00px;top:495.10px;font-size:9.8px;color:#0c0c0c;letter-spacing:-0.220px;transform:scaleX(0.9670);">5000,00</div>
<div class="t" id="t56" style="left:2.25px;top:540.51px;font-size:10.5px;color:#0c0c0c;letter-spacing:-0.220px;transform:scaleX(0.9551);">Inserisce:</div>
<div class="t" id="t57" style="left:666.50px;top:536.11px;font-size:10.5px;color:#0c0c0c;letter-spacing:-0.220px;transform:scaleX(0.9003);">Salva</div>
<div class="t" id="t58" style="left:730.50px;top:536.11px;font-size:10.5px;color:#0c0c0c;letter-spacing:-0.131px;">Annulla</div>
</div>
</body>
</html>
